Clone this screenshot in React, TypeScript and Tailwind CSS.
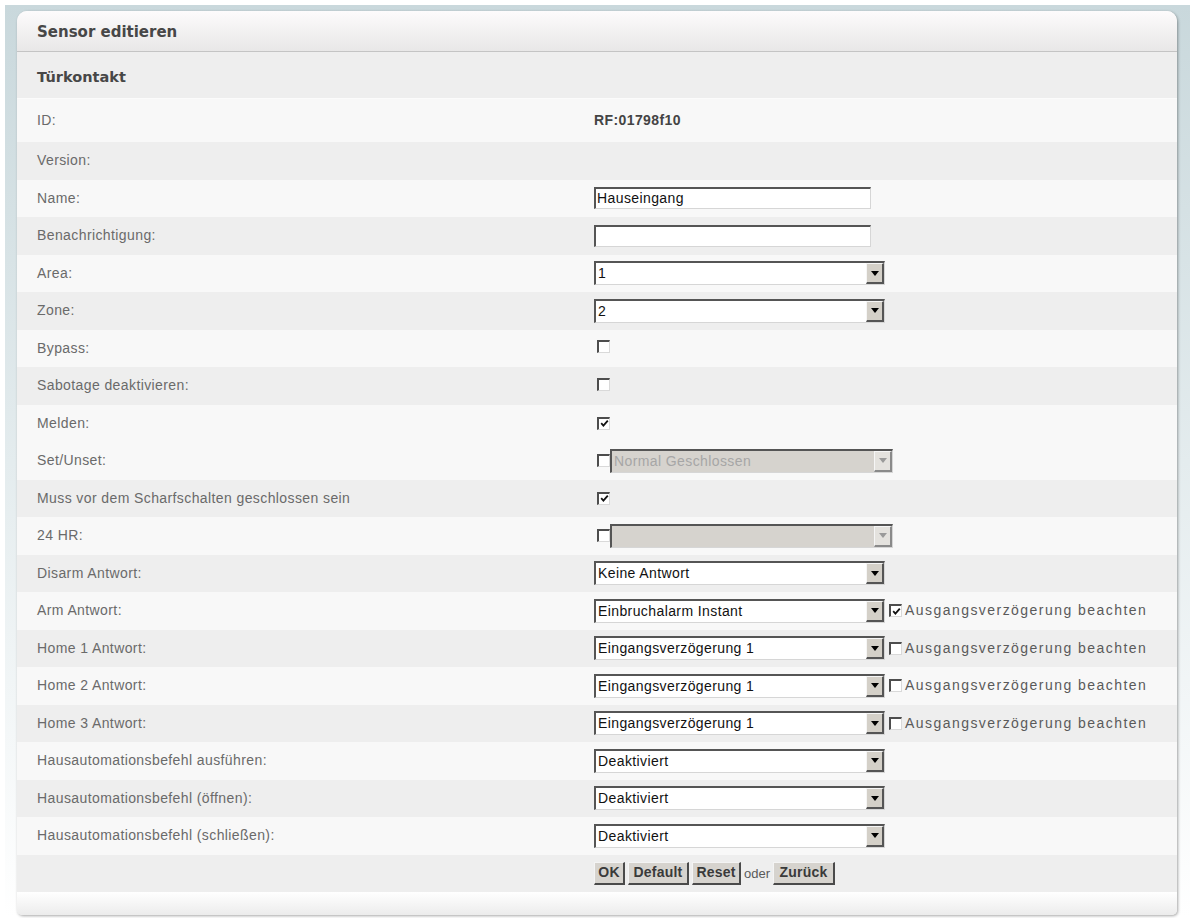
import React from 'react';

type Shade = 'light' | 'grey';

type Field =
    | { kind: 'none' }
    | { kind: 'input'; value: string }
    | { kind: 'select'; value: string }
    | { kind: 'check'; checked: boolean }
    | { kind: 'checkSelect'; value: string }
    | { kind: 'selectCheck'; value: string; checked: boolean }
    | { kind: 'buttons' };

interface Row {
    label: string;
    shade: Shade;
    field: Field;
}

const rows: Row[] = [
    { label: 'Version:', shade: 'grey', field: { kind: 'none' } },
    { label: 'Name:', shade: 'light', field: { kind: 'input', value: 'Hauseingang' } },
    { label: 'Benachrichtigung:', shade: 'grey', field: { kind: 'input', value: '' } },
    { label: 'Area:', shade: 'light', field: { kind: 'select', value: '1' } },
    { label: 'Zone:', shade: 'grey', field: { kind: 'select', value: '2' } },
    { label: 'Bypass:', shade: 'light', field: { kind: 'check', checked: false } },
    { label: 'Sabotage deaktivieren:', shade: 'grey', field: { kind: 'check', checked: false } },
    { label: 'Melden:', shade: 'light', field: { kind: 'check', checked: true } },
    { label: 'Set/Unset:', shade: 'light', field: { kind: 'checkSelect', value: 'Normal Geschlossen' } },
    { label: 'Muss vor dem Scharfschalten geschlossen sein', shade: 'grey', field: { kind: 'check', checked: true } },
    { label: '24 HR:', shade: 'light', field: { kind: 'checkSelect', value: '' } },
    { label: 'Disarm Antwort:', shade: 'grey', field: { kind: 'select', value: 'Keine Antwort' } },
    { label: 'Arm Antwort:', shade: 'light', field: { kind: 'selectCheck', value: 'Einbruchalarm Instant', checked: true } },
    { label: 'Home 1 Antwort:', shade: 'grey', field: { kind: 'selectCheck', value: 'Eingangsverzögerung 1', checked: false } },
    { label: 'Home 2 Antwort:', shade: 'light', field: { kind: 'selectCheck', value: 'Eingangsverzögerung 1', checked: false } },
    { label: 'Home 3 Antwort:', shade: 'grey', field: { kind: 'selectCheck', value: 'Eingangsverzögerung 1', checked: false } },
    { label: 'Hausautomationsbefehl ausführen:', shade: 'light', field: { kind: 'select', value: 'Deaktiviert' } },
    { label: 'Hausautomationsbefehl (öffnen):', shade: 'grey', field: { kind: 'select', value: 'Deaktiviert' } },
    { label: 'Hausautomationsbefehl (schließen):', shade: 'light', field: { kind: 'select', value: 'Deaktiviert' } },
    { label: '', shade: 'grey', field: { kind: 'buttons' } },
];

const Checkbox: React.FC<{ checked: boolean }> = ({ checked }) => (
    <span className="inline-flex h-[13px] w-[13px] shrink-0 items-center justify-center border-t-2 border-l-2 border-r border-b border-t-[#4d4d4d] border-l-[#4d4d4d] border-r-[#d9d9d9] border-b-[#d9d9d9] bg-white">
        {checked && (
            <svg width="9" height="9" viewBox="0 0 9 9">
                <path d="M1.2 4.2 L3.4 6.6 L7.8 1.6" fill="none" stroke="#111" strokeWidth="1.8" />
            </svg>
        )}
    </span>
);

const Select: React.FC<{ value: string; width: number; disabled?: boolean }> = ({ value, width, disabled }) => (
    <div
        className={`flex h-[24px] shrink-0 border-t-2 border-l-2 border-r border-b border-t-[#555] border-l-[#555] border-r-[#d6d6d6] border-b-[#d6d6d6] ${
            disabled ? 'bg-[#d6d3ce]' : 'bg-white'
        }`}
        style={{ width }}
    >
        <span
            className={`flex-1 truncate pl-[2px] text-[14px] leading-[21px] tracking-[0.4px] ${
                disabled ? 'text-[#a6a6a6]' : 'text-[#111]'
            }`}
        >
            {value}
        </span>
        <span
            className={`flex w-[18px] items-center justify-center border-t border-l border-r-2 border-b-2 border-t-[#f6f6f6] border-l-[#f6f6f6] ${
                disabled
                    ? 'border-r-[#8a8a8a] border-b-[#8a8a8a] bg-[#e4e2de]'
                    : 'border-r-[#555] border-b-[#555] bg-[#d4d0c8]'
            }`}
        >
            <svg width="8" height="5" viewBox="0 0 8 5">
                <path d="M0 0 H8 L4 5 Z" fill={disabled ? '#9a9a9a' : '#000'} />
            </svg>
        </span>
    </div>
);

const TextInput: React.FC<{ value: string }> = ({ value }) => (
    <div className="flex h-[22px] w-[277px] items-center border-t-2 border-l-2 border-r border-b border-t-[#555] border-l-[#555] border-r-[#d6d6d6] border-b-[#d6d6d6] bg-white pl-[1px] text-[14px] tracking-[0.4px] text-[#111]">
        {value}
    </div>
);

const Button: React.FC<{ label: string; width: number }> = ({ label, width }) => (
    <span
        className="flex h-[23px] items-center justify-center border-t border-l border-r-2 border-b-2 border-t-[#f4f4f4] border-l-[#f4f4f4] border-r-[#4a4a4a] border-b-[#4a4a4a] bg-[#d6d3ce] text-[14px] font-semibold tracking-[0.2px] text-[#3a3a3a]"
        style={{ width }}
    >
        {label}
    </span>
);

const FieldCell: React.FC<{ field: Field }> = ({ field }) => {
    switch (field.kind) {
        case 'input':
            return <TextInput value={field.value} />;
        case 'select':
            return <Select value={field.value} width={291} />;
        case 'check':
            return (
                <span className="pl-[3px]">
                    <Checkbox checked={field.checked} />
                </span>
            );
        case 'checkSelect':
            return (
                <div className="flex items-center pl-[3px]">
                    <Checkbox checked={false} />
                    <Select value={field.value} width={283} disabled />
                </div>
            );
        case 'selectCheck':
            return (
                <div className="flex items-center">
                    <Select value={field.value} width={291} />
                    <span className="ml-[4px] flex items-center">
                        <Checkbox checked={field.checked} />
                    </span>
                    <span className="ml-[3px] text-[14px] tracking-[1.45px] text-[#5a5a5a]">Ausgangsverzögerung beachten</span>
                </div>
            );
        case 'buttons':
            return (
                <div className="flex items-center gap-[3px]">
                    <Button label="OK" width={31} />
                    <Button label="Default" width={61} />
                    <Button label="Reset" width={49} />
                    <span className="text-[13px] text-[#5a5a5a]">oder</span>
                    <Button label="Zurück" width={62} />
                </div>
            );
        default:
            return null;
    }
};

const App: React.FC = () => {
    return (
        <div className="h-[918px] w-[1190px] overflow-hidden bg-white font-['Liberation_Sans',Arial,sans-serif]">
            <div className="ml-[5px] mt-[5px] h-[913px] bg-gradient-to-b from-[#c9d8dc] via-[#e4ecee] to-white pl-[12px] pr-[13px] pt-[6px]">
                <div className="rounded-t-[10px] rounded-b-[5px] bg-[#f7f7f7] shadow-[1px_1px_3px_rgba(0,0,0,0.35)]">
                    <div className="flex h-[41px] items-center rounded-t-[10px] border-b border-[#c4c4c4] bg-gradient-to-b from-[#fdfbfc] to-[#e8e7e7] px-[20px] pt-[3px]">
                        <span className="font-['DejaVu_Sans',sans-serif] text-[15px] font-bold text-[#474747]">Sensor editieren</span>
                    </div>
                    <div className="flex h-[47px] items-center border-b border-[#fbfbfb] bg-[#eeeeee] px-[20px] pt-[5px]">
                        <span className="font-['DejaVu_Sans',sans-serif] text-[14.5px] font-bold text-[#474747]">Türkontakt</span>
                    </div>
                    <div className="flex h-[43px] items-center bg-[#f8f8f8]">
                        <span className="w-[577px] pl-[20px] text-[14px] tracking-[0.35px] text-[#6a6a6a]">ID:</span>
                        <span className="text-[14px] font-bold tracking-[0.4px] text-[#444]">RF:01798f10</span>
                    </div>
                    {rows.map((row, i) => (
                        <div
                            key={i}
                            className={`flex h-[37.5px] items-center ${row.shade === 'light' ? 'bg-[#f8f8f8]' : 'bg-[#eeeeee]'}`}
                        >
                            <span className="w-[577px] shrink-0 pl-[20px] text-[14px] tracking-[0.4px] text-[#6a6a6a]">{row.label}</span>
                            <FieldCell field={row.field} />
                        </div>
                    ))}
                    <div className="h-[23px] rounded-b-[5px] bg-gradient-to-b from-white to-[#ececec]" />
                </div>
            </div>
        </div>
    );
};

export default App;
